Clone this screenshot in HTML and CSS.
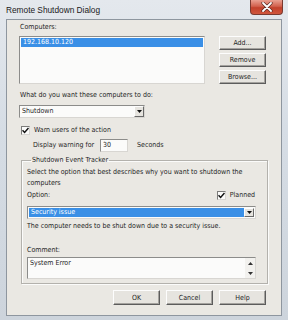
FILE: index.html
```html
<!DOCTYPE html>
<html lang="en">
<head>
  <meta charset="UTF-8" />
  <title>Remote Shutdown Dialog</title>
  <link rel="stylesheet" href="styles.css">
</head>
<body>
  <div class="window">
    <div class="titlebar">
      <span class="title">Remote Shutdown Dialog</span>
      <span class="close">
        <svg width="12" height="10" viewBox="0 0 12 10">
          <path d="M2 1 L10 9 M10 1 L2 9" stroke="#5a2a22" stroke-width="3.2" stroke-linecap="round"/>
          <path d="M2 1 L10 9 M10 1 L2 9" stroke="#fff" stroke-width="1.8" stroke-linecap="round"/>
        </svg>
      </span>
    </div>

    <div class="client">
      <div class="label">Computers:</div>
      <div class="computers">
        <div class="listbox">
          <div class="item selected">192.168.10.120</div>
        </div>
        <div class="side-buttons">
          <button class="btn">Add...</button>
          <button class="btn">Remove</button>
          <button class="btn">Browse...</button>
        </div>
      </div>

      <div class="label gap-what">What do you want these computers to do:</div>
      <div class="combo combo-action">
        <span class="combo-text">Shutdown</span>
        <span class="drop"><svg width="5" height="3" viewBox="0 0 5 3"><path d="M0 0 H5 L2.5 3 Z" fill="#111"/></svg></span>
      </div>

      <div class="check-row">
        <span class="checkbox"><svg width="7" height="7" viewBox="0 0 7 7"><path d="M0.5 3.2 L2.6 5.4 L6.5 1" stroke="#111" stroke-width="1.5" fill="none"/></svg></span>
        <span>Warn users of the action</span>
      </div>

      <div class="warn-row">
        <span>Display warning for</span>
        <span class="input">30</span>
        <span>Seconds</span>
      </div>

      <fieldset class="group">
        <legend>Shutdown Event Tracker</legend>
        <p class="desc">Select the option that best describes why you want to shutdown the<br>computers</p>
        <div class="option-row">
          <span>Option:</span>
          <span class="planned">
            <span class="checkbox"><svg width="7" height="7" viewBox="0 0 7 7"><path d="M0.5 3.2 L2.6 5.4 L6.5 1" stroke="#111" stroke-width="1.5" fill="none"/></svg></span>
            <span>Planned</span>
          </span>
        </div>
        <div class="combo combo-reason">
          <span class="combo-text selected">Security issue</span>
          <span class="drop"><svg width="5" height="3" viewBox="0 0 5 3"><path d="M0 0 H5 L2.5 3 Z" fill="#111"/></svg></span>
        </div>
        <p class="note">The computer needs to be shut down due to a security issue.</p>
        <div class="label gap-comment">Comment:</div>
        <div class="textarea">
          <span class="ta-text">System Error</span>
          <span class="scroll">
            <svg width="5" height="3" viewBox="0 0 5 3"><path d="M0 3 H5 L2.5 0 Z" fill="#333"/></svg>
            <svg width="5" height="3" viewBox="0 0 5 3"><path d="M0 0 H5 L2.5 3 Z" fill="#333"/></svg>
          </span>
        </div>
      </fieldset>

      <div class="actions">
        <button class="btn">OK</button>
        <button class="btn">Cancel</button>
        <button class="btn">Help</button>
      </div>
    </div>
  </div>
</body>
</html>
```

FILE: styles.css
```css
* {
  margin: 0;
  padding: 0;
  box-sizing: border-box;
}

body {
  font-family: 'DejaVu Sans Condensed', 'DejaVu Sans', sans-serif;
  font-stretch: condensed;
  font-size: 7px;
  line-height: 11px;
  color: #1e1e1e;
  background: #cfd6de;
}

.window {
  width: 288px;
  height: 320px;
  background: linear-gradient(180deg, #e4e8ed 0%, #d6dde5 40%, #cdd4dc 100%);
  padding: 0 6px 4px 6px;
  display: flex;
  flex-direction: column;
}

.titlebar {
  height: 19px;
  display: flex;
  justify-content: space-between;
  align-items: flex-start;
}

.title {
  font-family: 'Liberation Sans', Arial, sans-serif;
  font-stretch: normal;
  font-size: 8.3px;
  line-height: 19px;
  color: #1a1a1a;
  margin-top: 1px;
}

.close {
  width: 33px;
  height: 15px;
  margin-right: -1px;
  display: flex;
  align-items: center;
  justify-content: center;
  background: linear-gradient(180deg, #e9a091 0%, #d2614d 45%, #c2412b 55%, #d0573e 100%);
  border: 1px solid #7a3a30;
  border-top: none;
  border-radius: 0 0 4px 4px;
}

.client {
  flex: 1;
  background: #eae8e3;
  border: 1px solid #8e969f;
  padding: 2px 15px 0 12px;
}

.label {
  height: 11px;
  padding-left: 1px;
}

.computers {
  display: flex;
  margin-top: 3px;
  gap: 14px;
}

.listbox {
  width: 186px;
  height: 48px;
  background: #fbfbfa;
  border: 1px solid #8c8c8a;
  border-right-color: #d8d6d2;
  border-bottom-color: #d8d6d2;
  padding: 1px;
}

.item {
  height: 9px;
  line-height: 9px;
  padding-left: 2px;
}

.selected {
  background: #3a8fe6;
  color: #fff;
}

.side-buttons {
  display: flex;
  flex-direction: column;
  gap: 3px;
}

.btn {
  font-family: inherit;
  font-stretch: condensed;
  font-size: 7px;
  color: #1e1e1e;
  width: 47px;
  height: 14px;
  background: #e6e4df;
  border: 1px solid #5c5c5c;
  border-top-color: #fdfdfd;
  border-left-color: #fdfdfd;
  box-shadow: inset -1px -1px 0 #a4a29e;
}

.gap-what {
  margin-top: 6px;
}

.combo {
  display: flex;
  height: 13px;
  background: #fbfbfa;
  border: 1px solid #8c8c8a;
  border-right-color: #d8d6d2;
  border-bottom-color: #d8d6d2;
}

.combo-action {
  width: 126px;
  margin-top: 4px;
}

.combo-text {
  flex: 1;
  line-height: 11px;
  padding-left: 2px;
}

.drop {
  width: 10px;
  display: flex;
  align-items: center;
  justify-content: center;
  background: #e6e4df;
  border: 1px solid #fdfdfd;
  border-right-color: #6a6a6a;
  border-bottom-color: #6a6a6a;
}

.check-row {
  display: flex;
  align-items: center;
  gap: 4px;
  margin-top: 7px;
  padding-left: 2px;
  height: 11px;
}

.checkbox {
  width: 9px;
  height: 9px;
  display: flex;
  align-items: center;
  justify-content: center;
  background: #fbfbfa;
  border: 1px solid #7d7d7b;
  border-right-color: #d8d6d2;
  border-bottom-color: #d8d6d2;
}

.warn-row {
  display: flex;
  align-items: center;
  height: 13px;
  margin-top: 3px;
  padding-left: 14px;
}

.input {
  width: 28px;
  height: 13px;
  margin: 0 9px 0 6px;
  padding-left: 2px;
  background: #fbfbfa;
  border: 1px solid #8c8c8a;
  border-right-color: #d8d6d2;
  border-bottom-color: #d8d6d2;
}

.group {
  margin: 3px 0 0 2px;
  width: 247px;
  border: 1px solid #b3b1ac;
  box-shadow: inset 1px 1px 0 #fbfbfa, 1px 1px 0 #fbfbfa;
  padding: 1px 11px 4px 5px;
}

.group legend {
  margin-left: 4px;
  padding: 0 1px;
  height: 11px;
}

.desc {
  height: 22px;
  white-space: nowrap;
}

.option-row {
  display: flex;
  justify-content: space-between;
  align-items: center;
  height: 11px;
  margin-top: 1px;
}

.planned {
  display: flex;
  align-items: center;
  gap: 4px;
  margin-right: 1px;
}

.combo-reason {
  margin-top: 5px;
  padding: 1px;
}

.combo-reason .combo-text {
  line-height: 9px;
}

.note {
  height: 11px;
  margin-top: 2px;
  white-space: nowrap;
}

.gap-comment {
  margin-top: 13px;
  padding-left: 0;
}

.textarea {
  display: flex;
  height: 22px;
  margin-top: 1px;
  background: #fbfbfa;
  border: 1px solid #8c8c8a;
  border-right-color: #d8d6d2;
  border-bottom-color: #d8d6d2;
}

.ta-text {
  flex: 1;
  padding-left: 2px;
}

.scroll {
  width: 10px;
  display: flex;
  flex-direction: column;
  justify-content: space-around;
  align-items: center;
  background: #f2f1ee;
}

.actions {
  display: flex;
  justify-content: flex-end;
  gap: 6px;
  margin-top: 6px;
  height: 15px;
}

.actions .btn {
  height: 15px;
}
```
